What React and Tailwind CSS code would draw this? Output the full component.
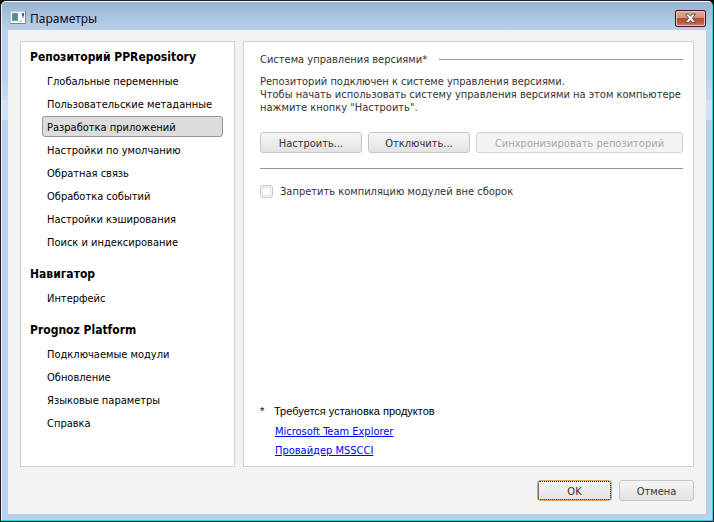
import React from "react";

const groups = [
  {
    title: "Репозиторий PPRepository",
    items: [
      "Глобальные переменные",
      "Пользовательские метаданные",
      "Разработка приложений",
      "Настройки по умолчанию",
      "Обратная связь",
      "Обработка событий",
      "Настройки кэширования",
      "Поиск и индексирование",
    ],
  },
  { title: "Навигатор", items: ["Интерфейс"] },
  {
    title: "Prognoz Platform",
    items: ["Подключаемые модули", "Обновление", "Языковые параметры", "Справка"],
  },
];

function Button({ children, className = "", ...rest }) {
  return (
    <button
      type="button"
      className={
        "h-[21px] rounded-[3px] border border-[#c3c6ca] bg-gradient-to-b from-[#f6f6f6] to-[#e2e2e2] pt-[3px] text-center leading-4 text-[#333] disabled:border-[#d0d2d5] disabled:from-[#f3f3f3] disabled:to-[#f3f3f3] disabled:text-[#a9a9a9] " +
        className
      }
      {...rest}
    >
      {children}
    </button>
  );
}

function AppIcon() {
  return (
    <svg width="16" height="13" viewBox="0 0 16 13" shapeRendering="crispEdges" aria-hidden="true">
      <rect width="16" height="13" fill="#858585" />
      <rect width="15" height="12" fill="#c9c9c9" />
      <rect x="1" y="1" width="14" height="11" fill="#fbfbfb" />
      <rect x="2" y="2" width="6" height="8" fill="#6a9fae" />
      <rect x="3" y="3" width="4" height="6" fill="#4c8f88" />
      <rect x="12" y="2" width="2" height="3" fill="#3c61ae" />
      <rect x="12" y="5" width="2" height="2" fill="#9cc4ae" />
      <rect x="9" y="9" width="3" height="2" fill="#d8d8d8" />
    </svg>
  );
}

function Sidebar() {
  return (
    <nav className="flex w-[215px] shrink-0 flex-col gap-[9px] border border-[#cfd2d5] bg-white pt-[2px] text-black">
      {groups.map((group) => (
        <section key={group.title}>
          <h2 className="h-[26px] pl-[9px] text-[12px] leading-[26px] font-bold">{group.title}</h2>
          <ul className="flex flex-col gap-[2px] pr-[11px] pl-[21px]">
            {group.items.map((item) => (
              <li key={item} className="flex">
                <button
                  type="button"
                  aria-current={item === "Разработка приложений" ? "page" : undefined}
                  className="h-[21px] flex-1 rounded-[3px] border border-transparent pt-[3px] pl-1 text-left leading-4 whitespace-nowrap aria-[current=page]:border-[#979797] aria-[current=page]:bg-[#dcdcdc]"
                >
                  {item}
                </button>
              </li>
            ))}
          </ul>
        </section>
      ))}
    </nav>
  );
}

function VersionControl() {
  return (
    <main className="flex min-w-0 flex-1 flex-col border border-[#cfd2d5] bg-white pt-2 pr-[10px] pb-[6px] pl-4 text-[#333]">
      <div className="flex items-center gap-3">
        <h2 className="pt-[2px] leading-4">Система управления версиями*</h2>
        <div className="h-px flex-1 bg-[#979797]" />
      </div>
      <p className="mt-[7px] leading-[13px]">
        Репозиторий подключен к системе управления версиями.
        <br />
        Чтобы начать использовать систему управления версиями на этом компьютере
        <br />
        нажмите кнопку "Настроить".
      </p>
      <div className="mt-[18px] flex gap-[6px]">
        <Button className="w-[102px]">Настроить...</Button>
        <Button className="w-[102px]">Отключить...</Button>
        <Button className="flex-1" disabled>
          Синхронизировать репозиторий
        </Button>
      </div>
      <hr className="mt-[15px] border-[#979797]" />
      <div className="mt-[14px] flex h-4 items-center gap-[7px]">
        <input
          id="no-compile"
          type="checkbox"
          className="size-[13px] appearance-none rounded-[3px] border border-[#c3c6ca] bg-white shadow-[inset_0_0_0_1px_#fafafa,inset_0_0_0_2px_#dfe2e5] checked:bg-[#6c8fb5]"
        />
        <label htmlFor="no-compile" className="pt-[2px] leading-4">
          Запретить компиляцию модулей вне сборок
        </label>
      </div>
      <div className="mt-auto">
        <p className="flex font-['Liberation_Sans',Arial,sans-serif] text-[11px] leading-[18px] text-black">
          <span className="w-[14px]">*</span>
          <span>Требуется установка продуктов</span>
        </p>
        <ul className="pt-[2px] pl-[15px] leading-[19px] text-[#0000ff] underline">
          <li>
            <a href="#team-explorer">Microsoft Team Explorer</a>
          </li>
          <li>
            <a href="#msscci">Провайдер MSSCCI</a>
          </li>
        </ul>
      </div>
    </main>
  );
}

export default function App() {
  return (
    <div className="min-h-screen bg-black font-['DejaVu_Sans_Condensed','DejaVu_Sans',sans-serif] text-[11px]">
      <div className="flex min-h-screen flex-col rounded-t-[6px] border border-[#1b1b22] bg-black">
        <div className="flex flex-1 flex-col rounded-t-[5px] border border-t-white border-r-[#35d3ea] border-b-[#35d3ea] border-l-[#eef4fb] bg-[#b9d1ea]">
          <header className="flex h-7 items-start rounded-t-[4px] bg-gradient-to-b from-[#99b4d1] to-[#b9d1ea] pr-[6px] pl-2">
            <span className="mt-[9px]">
              <AppIcon />
            </span>
            <h1 className="mt-[9px] ml-1 flex-1 font-['Noto_Sans','Open_Sans',sans-serif] text-[12px] leading-4 text-[#0c0c18]">
              Параметры
            </h1>
            <button
              type="button"
              aria-label="Закрыть"
              className="mt-2 flex h-[17px] w-[31px] items-center justify-center rounded-[2px] border border-[#43141d] bg-[linear-gradient(to_bottom,#e3a597_0%,#d98d7c_50%,#b0522f_50%,#b85636_70%,#cf7f6c_100%)] shadow-[inset_0_0_0_1px_#f0c0b4]"
            >
              <svg width="13" height="11" viewBox="0 0 13 11" aria-hidden="true">
                <path
                  d="M1.500 1h3.200L6.500 3.200 8.300 1h3.200L8.400 5.300l3.400 4.200H8.300L6.500 7.400 4.700 9.500H1.200l3.400-4.200z"
                  fill="#f4f4f4"
                  stroke="#535666"
                  strokeWidth="1"
                />
              </svg>
            </button>
          </header>
          <div className="flex flex-1 flex-col bg-[linear-gradient(to_bottom,#b9d1ea_48px,#c9dcf2_70px,#d3e1f5_70px,#d3e1f5_90px,#b9d1ea_90px)] px-[6px] pb-[6px]">
            <div className="flex flex-1 flex-col bg-[#f3f3f3] px-3 pt-[11px] pb-[13px]">
              <div className="flex flex-1 gap-2">
                <Sidebar />
                <VersionControl />
              </div>
              <footer className="mt-[13px] flex justify-end gap-[7px]">
                <Button className="w-[75px] border-[#e0a45c] outline-1 -outline-offset-2 outline-dotted outline-black">
                  OK
                </Button>
                <Button className="w-[75px]">Отмена</Button>
              </footer>
            </div>
          </div>
        </div>
      </div>
    </div>
  );
}
